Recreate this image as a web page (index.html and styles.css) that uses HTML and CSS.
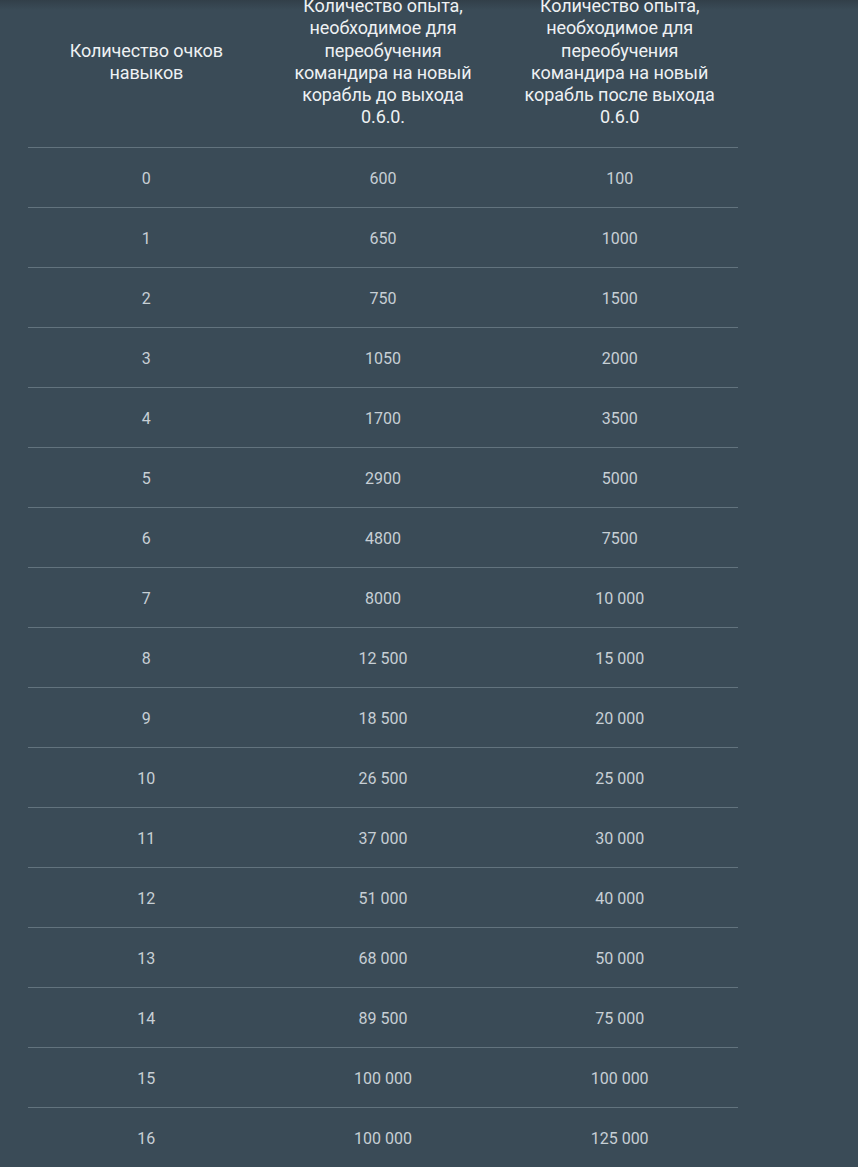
FILE: index.html
```html
<!DOCTYPE html>
<html lang="ru">
<head>
<meta charset="utf-8">
<title>Переобучение командира</title>
<link rel="stylesheet" href="styles.css">
</head>
<body>
<div class="page">
  <table class="xp-table">
    <thead>
      <tr>
        <th>Количество очков навыков</th>
        <th>Количество опыта, необходимое для переобучения командира на новый корабль до выхода 0.6.0.</th>
        <th>Количество опыта, необходимое для переобучения командира на новый корабль после выхода 0.6.0</th>
      </tr>
    </thead>
    <tbody>
      <tr><td>0</td><td>600</td><td>100</td></tr>
      <tr><td>1</td><td>650</td><td>1000</td></tr>
      <tr><td>2</td><td>750</td><td>1500</td></tr>
      <tr><td>3</td><td>1050</td><td>2000</td></tr>
      <tr><td>4</td><td>1700</td><td>3500</td></tr>
      <tr><td>5</td><td>2900</td><td>5000</td></tr>
      <tr><td>6</td><td>4800</td><td>7500</td></tr>
      <tr><td>7</td><td>8000</td><td>10 000</td></tr>
      <tr><td>8</td><td>12 500</td><td>15 000</td></tr>
      <tr><td>9</td><td>18 500</td><td>20 000</td></tr>
      <tr><td>10</td><td>26 500</td><td>25 000</td></tr>
      <tr><td>11</td><td>37 000</td><td>30 000</td></tr>
      <tr><td>12</td><td>51 000</td><td>40 000</td></tr>
      <tr><td>13</td><td>68 000</td><td>50 000</td></tr>
      <tr><td>14</td><td>89 500</td><td>75 000</td></tr>
      <tr><td>15</td><td>100 000</td><td>100 000</td></tr>
      <tr><td>16</td><td>100 000</td><td>125 000</td></tr>
    </tbody>
  </table>
</div>
</body>
</html>
```
FILE: styles.css
```css
html, body {
  margin: 0;
  padding: 0;
  background: #3a4b57;
  height: 100%;
  overflow: hidden;
}
body {
  font-family: Roboto, "Liberation Sans", Arial, sans-serif;
  background: linear-gradient(to bottom, #323f49 0, #3a4b57 10px, #3a4b57 100%);
}
.page {
  padding: 0 0 0 28px;
}
.xp-table {
  width: 710px;
  margin-top: -25px;
  border-collapse: collapse;
  table-layout: fixed;
}
.xp-table th {
  width: 33.333%;
  padding: 20px 15px 18px;
  font-size: 18px;
  line-height: 22.25px;
  font-weight: 400;
  letter-spacing: -0.1px;
  color: #eef1f3;
  text-align: center;
  vertical-align: middle;
  border-bottom: 1px solid #62737e;
}
.xp-table td {
  height: 55px;
  padding: 4px 15px 0;
  font-size: 16px;
  line-height: 20px;
  color: #c7cfd5;
  text-align: center;
  vertical-align: middle;
  border-bottom: 1px solid #62737e;
}
```
